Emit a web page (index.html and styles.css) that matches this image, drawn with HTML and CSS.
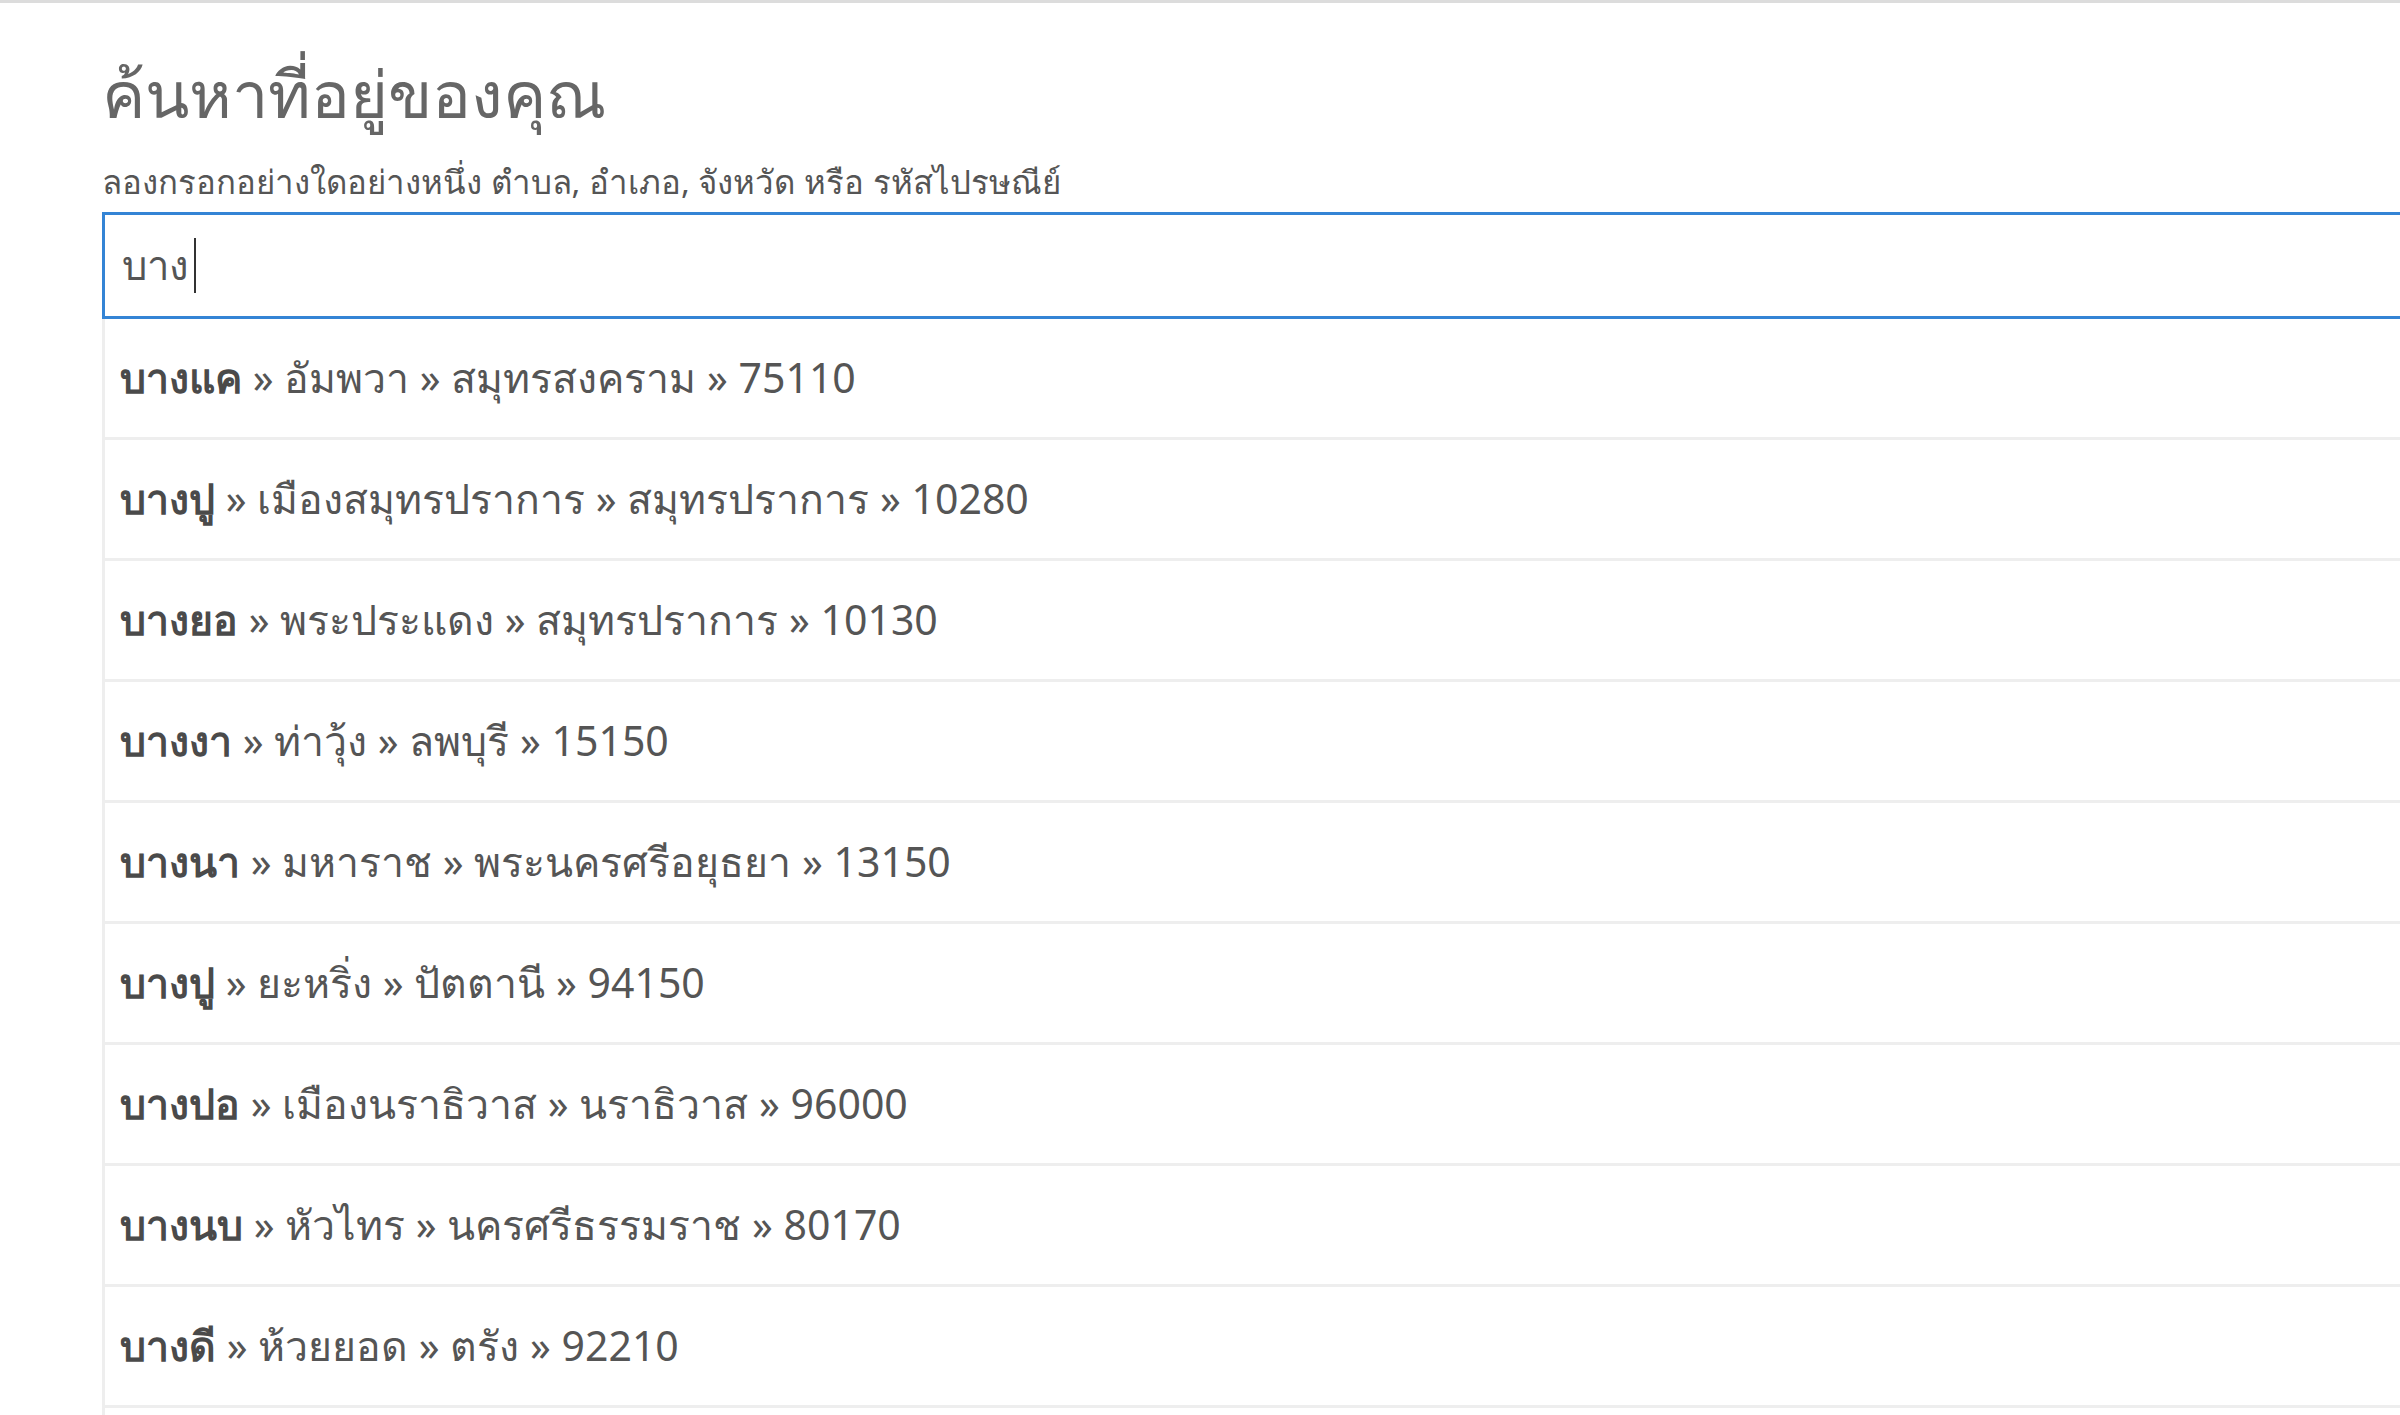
FILE: index.html
```html
<html>
  <head>
    <meta charset="utf-8" />
    <title>ค้นหาที่อยู่ของคุณ</title>
    <link rel="stylesheet" href="styles.css">
  </head>
  <body>
    <div id="page">
      <h1 class="title">ค้นหาที่อยู่ของคุณ</h1>
      <p class="hint">ลองกรอกอย่างใดอย่างหนึ่ง ตำบล, อำเภอ, จังหวัด หรือ รหัสไปรษณีย์</p>
      <div class="search">
        <span class="query">บาง</span><span class="caret"></span>
      </div>
      <ul class="results">
        <li><b>บางแค</b> » อัมพวา » สมุทรสงคราม » 75110</li>
        <li><b>บางปู</b> » เมืองสมุทรปราการ » สมุทรปราการ » 10280</li>
        <li><b>บางยอ</b> » พระประแดง » สมุทรปราการ » 10130</li>
        <li><b>บางงา</b> » ท่าวุ้ง » ลพบุรี » 15150</li>
        <li><b>บางนา</b> » มหาราช » พระนครศรีอยุธยา » 13150</li>
        <li><b>บางปู</b> » ยะหริ่ง » ปัตตานี » 94150</li>
        <li><b>บางปอ</b> » เมืองนราธิวาส » นราธิวาส » 96000</li>
        <li><b>บางนบ</b> » หัวไทร » นครศรีธรรมราช » 80170</li>
        <li><b>บางดี</b> » ห้วยยอด » ตรัง » 92210</li>
      </ul>
    </div>
  </body>
</html>
```

FILE: styles.css
```css
body {
  margin: 0;
  border-top: 3px solid #dcdcdc;
  background: #fff;
  color: #555;
  font-family: "Noto Sans", "DejaVu Sans", sans-serif;
  overflow: hidden;
}

#page {
  padding: 51px 0 0 102px;
}

.title {
  margin: 0;
  font-size: 65px;
  font-weight: normal;
  line-height: 1.2;
  color: #666;
}

.hint {
  margin: 24px 0 3px;
  font-size: 33px;
  color: #555;
}

.search {
  width: 2400px;
  height: 101px;
  border: 3px solid #3484d5;
  padding-left: 17px;
  display: flex;
  align-items: center;
  font-size: 40px;
  color: #555;
}

.caret {
  width: 2px;
  height: 55px;
  margin-left: 5px;
  background: #333;
}

.results {
  width: 2400px;
  list-style: none;
  margin: 0;
  padding: 0 0 40px;
  border-left: 3px solid #eee;
}

.results li {
  height: 118px;
  border-bottom: 3px solid #eee;
  padding-left: 15px;
  display: flex;
  align-items: center;
  font-size: 41px;
  white-space: pre;
}

.results b {
  color: #4a4a4a;
}
```
